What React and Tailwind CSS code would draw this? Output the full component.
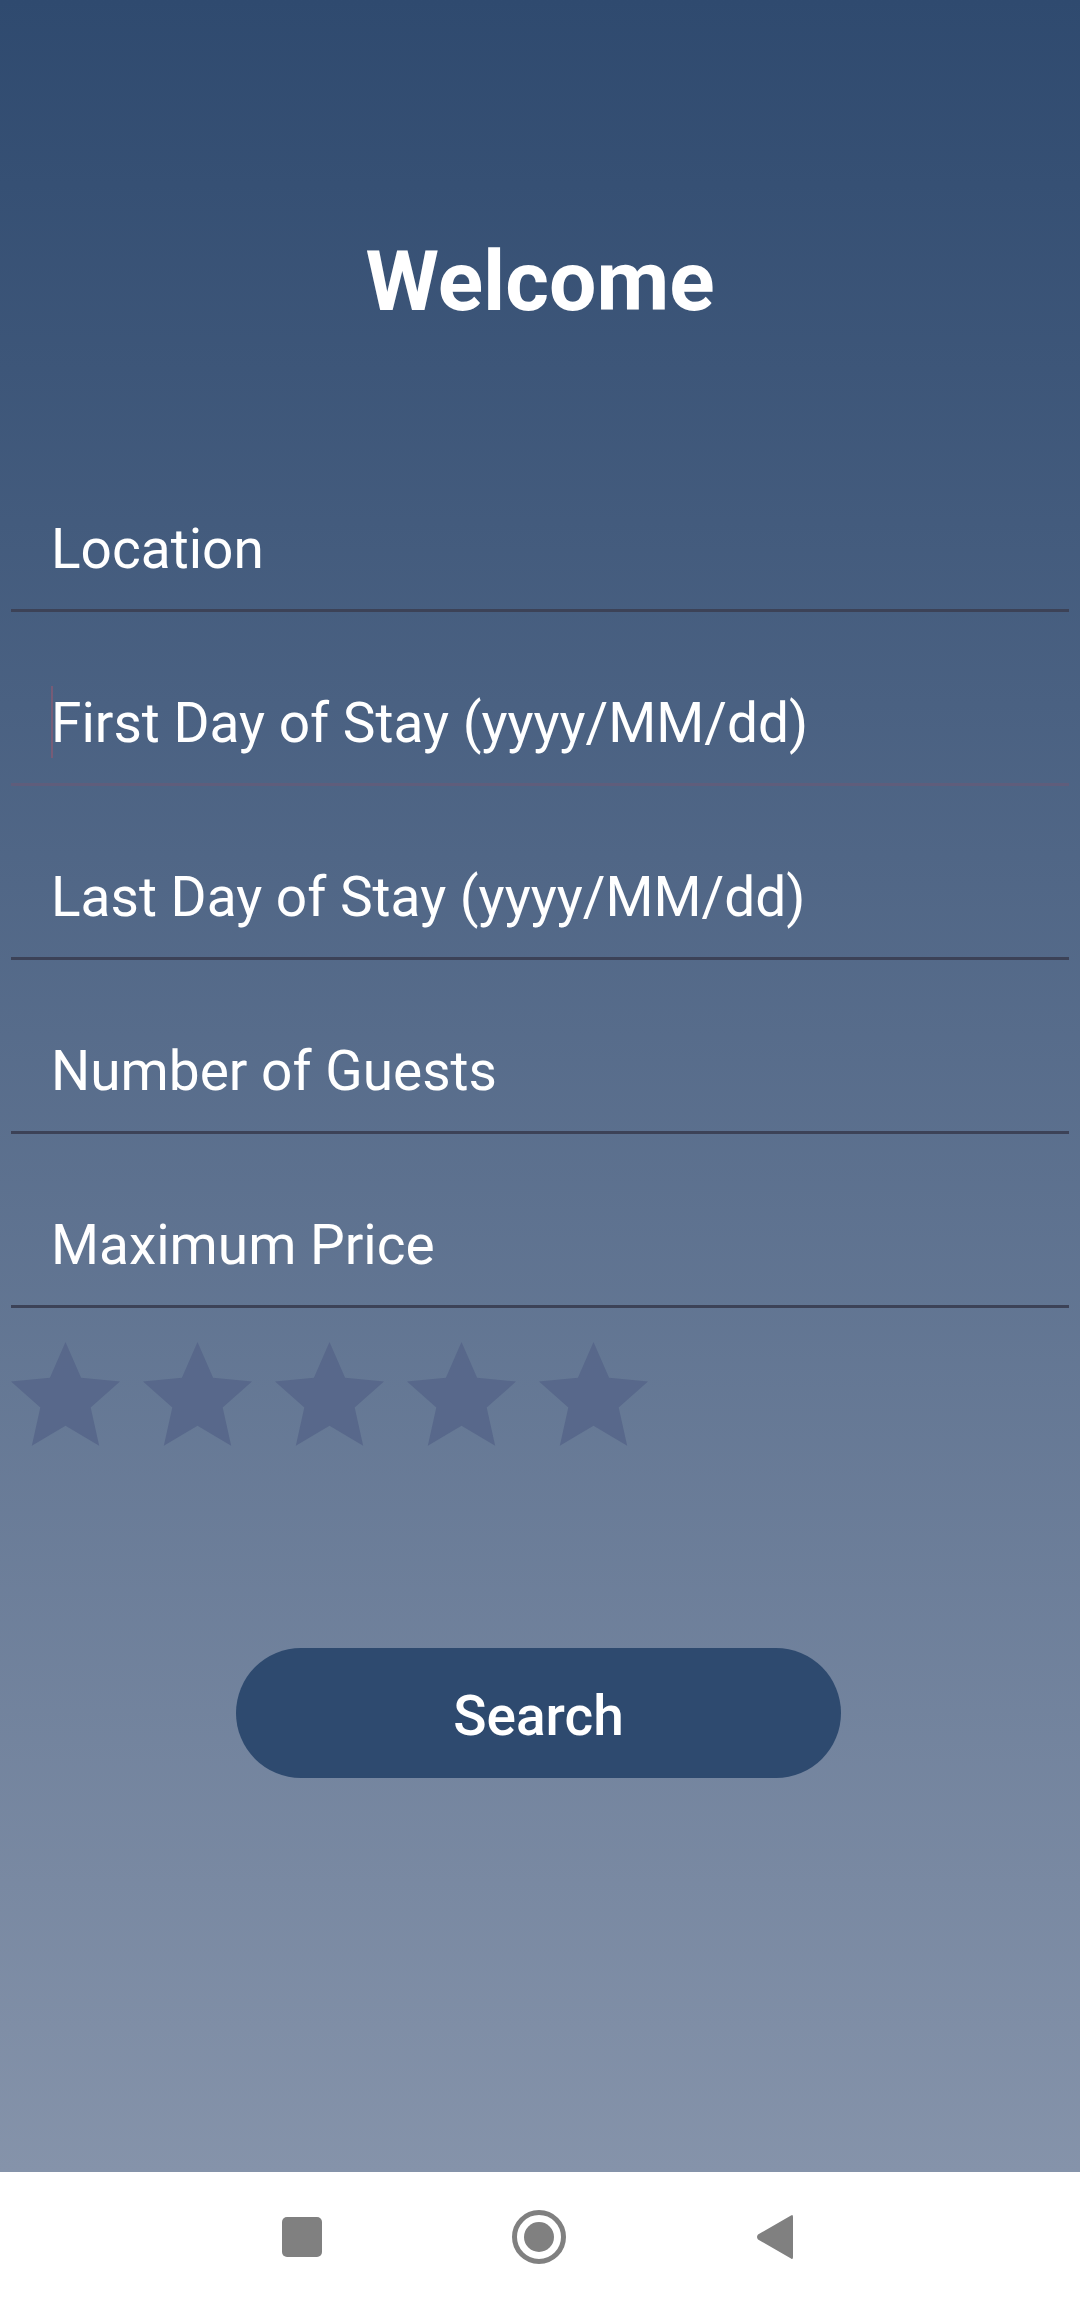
const fields = [
  'Location',
  'First Day of Stay (yyyy/MM/dd)',
  'Last Day of Stay (yyyy/MM/dd)',
  'Number of Guests',
  'Maximum Price',
];

const starPoints = (() => {
  const pts = [];
  const cx = 54.5;
  const cy = 57.3;
  const outer = 57.3;
  const inner = 26.5;
  for (let i = 0; i < 10; i++) {
    const r = i % 2 === 0 ? outer : inner;
    const a = (Math.PI / 5) * i - Math.PI / 2;
    pts.push(`${(cx + r * Math.cos(a)).toFixed(2)},${(cy + r * Math.sin(a)).toFixed(2)}`);
  }
  return pts.join(' ');
})();

const Star = () => (
  <svg width="109" height="104" viewBox="0 0 109 104">
    <polygon points={starPoints} fill="#56668a" fillOpacity="0.9" />
  </svg>
);

const Field = ({ label, focused }) => (
  <div
    className={`relative mx-[11px] h-[174px] pt-[79px] pl-[40px] border-b-[3px] ${
      focused ? 'border-[#5f5d7b]' : 'border-[#3c4257]'
    }`}
  >
    {focused && <div className="absolute left-[40px] top-[74px] w-[2px] h-[72px] bg-[#8a5a72]/70" />}
    <div className="text-[55px] leading-[64px] text-white">{label}</div>
  </div>
);

export default function App() {
  return (
    <div className="w-[1080px] h-[2302px] flex flex-col font-['Roboto',sans-serif]">
      <div className="h-[2172px] bg-gradient-to-b from-[#2f4a6f] to-[#8593aa] flex flex-col">
        <h1 className="pt-[240px] text-center text-[84px] leading-[84px] font-bold text-white">Welcome</h1>

        <div className="mt-[114px] flex flex-col">
          {fields.map((f, i) => (
            <Field key={f} label={f} focused={i === 1} />
          ))}
        </div>

        <div className="mt-[34px] pl-[11px] flex gap-[23px]">
          {[0, 1, 2, 3, 4].map((i) => (
            <Star key={i} />
          ))}
        </div>

        <button className="mt-[202px] ml-[236px] w-[605px] h-[130px] rounded-full bg-[#2e4a6f] text-white text-[55px] font-medium pt-[6px] flex items-center justify-center">
          Search
        </button>
      </div>

      {/* nav bar */}
      <div className="h-[130px] bg-white flex items-center pl-[282px] gap-[190px]">
        <div className="w-[40px] h-[40px] rounded-[5px] bg-[#808080]" />
        <div className="w-[54px] h-[54px] rounded-full border-[5px] border-[#808080] flex items-center justify-center">
          <div className="w-[30px] h-[30px] rounded-full bg-[#808080]" />
        </div>
        <svg width="38" height="46" viewBox="0 0 38 46">
          <path d="M35 1.5 Q37 0 37 3 L37 43 Q37 46 35 44.5 L2 25.5 Q0 23 2 20.5 Z" fill="#808080" />
        </svg>
      </div>
    </div>
  );
}
